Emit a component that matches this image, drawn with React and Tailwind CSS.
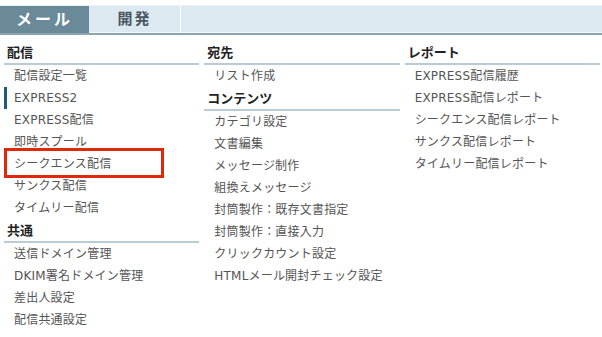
import React from "react";

const FONT = { fontFamily: '"DejaVu Sans", "Noto Sans CJK JP", sans-serif' };

const COLUMNS = [
  [
    {
      title: "配信",
      items: [
        "配信設定一覧",
        "EXPRESS2",
        "EXPRESS配信",
        "即時スプール",
        "シークエンス配信",
        "サンクス配信",
        "タイムリー配信",
      ],
    },
    {
      title: "共通",
      items: ["送信ドメイン管理", "DKIM署名ドメイン管理", "差出人設定", "配信共通設定"],
    },
  ],
  [
    { title: "宛先", items: ["リスト作成"] },
    {
      title: "コンテンツ",
      items: [
        "カテゴリ設定",
        "文書編集",
        "メッセージ制作",
        "組換えメッセージ",
        "封筒製作：既存文書指定",
        "封筒製作：直接入力",
        "クリックカウント設定",
        "HTMLメール開封チェック設定",
      ],
    },
  ],
  [
    {
      title: "レポート",
      items: [
        "EXPRESS配信履歴",
        "EXPRESS配信レポート",
        "シークエンス配信レポート",
        "サンクス配信レポート",
        "タイムリー配信レポート",
      ],
    },
  ],
];

const Section = ({ title, items }) => (
  <div>
    <div className="pt-[4px] pb-[2px] pl-[3px] border-b-2 border-[#b9cbd4] text-[13px] leading-[16px] font-bold text-[#222]">
      {title}
    </div>
    {items.map((item) => (
      <div
        key={item}
        className={
          "h-[22px] flex items-center text-[12px] tracking-[0.2px] text-[#555] " +
          (item === "EXPRESS2"
            ? "border-l-[3px] border-[#1d5b78] pl-[7px]"
            : "pl-[10px]")
        }
      >
        {item}
      </div>
    ))}
  </div>
);

export default function App() {
  return (
    <div className="relative w-[602px] h-[337px] bg-white" style={FONT}>
      {/* タブ */}
      <div className="pt-[5px]">
        <div className="flex h-[30px] bg-[#dce9f0] border-t border-[#e9f1f5] border-b-2 border-b-[#8ba4b1] shadow-[inset_0_-1px_0_#f4f8fa]">
          <div className="w-[89px] flex items-center justify-center bg-[#6a8999] text-white text-[16px] font-bold tracking-[3px]">
            メール
          </div>
          <div className="w-[92px] flex items-center justify-center border-r border-white text-[#4a5661] text-[15px] font-bold tracking-[2px]">
            開発
          </div>
        </div>
      </div>

      {/* メニュー */}
      <div className="grid grid-cols-3 gap-[5px] pl-[4px] pr-[2px] pt-[6px]">
        {COLUMNS.map((col, i) => (
          <div key={i}>
            {col.map((s) => (
              <Section key={s.title} title={s.title} items={s.items} />
            ))}
          </div>
        ))}
      </div>

      {/* 注目枠 */}
      <div className="absolute left-[4px] top-[148px] w-[160px] h-[30px] border-[3px] border-[#e0290a]" />
    </div>
  );
}
